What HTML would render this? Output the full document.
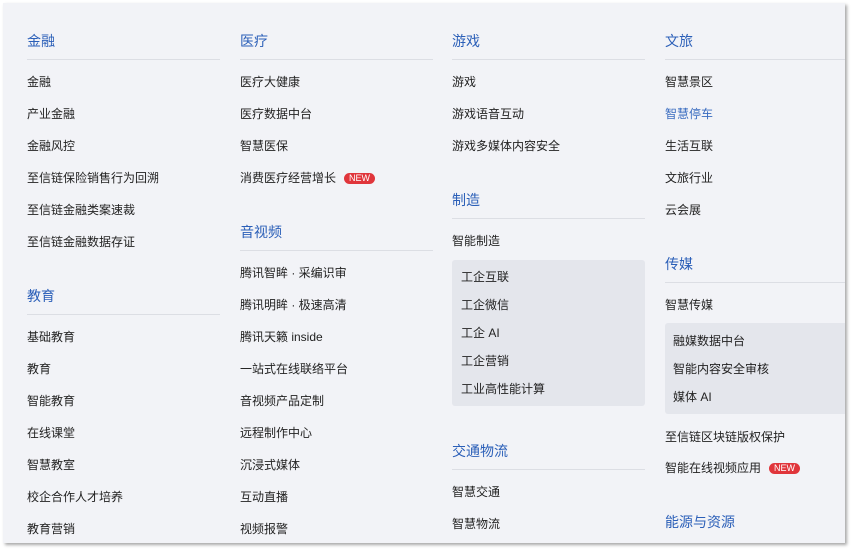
<!DOCTYPE html>
<html><head><meta charset="utf-8"><style>
body{margin:0;width:856px;height:554px;background:#fff;overflow:hidden;font-family:"Liberation Sans","Noto Sans CJK SC",sans-serif;}
#p{position:absolute;left:3px;top:3px;width:842px;height:540px;background:#f2f3f7;box-shadow:2px 2px 3px rgba(0,0,0,.35);overflow:hidden}
.t{position:absolute;font-size:12px;color:#222;line-height:16px;white-space:nowrap;transform:translateY(-8px)}
.h{position:absolute;font-size:14px;color:#2b5fb8;line-height:18px;white-space:nowrap;transform:translateY(-9px)}
.l{position:absolute;height:1px;background:#dcdee4;width:193px}
.b{position:absolute;background:#e4e6ec;border-radius:3px}
.n{display:inline-block;background:#e0353b;color:#fff;font-size:9px;line-height:11px;padding:0 5px;border-radius:6px;margin-left:8px;vertical-align:1px}
</style></head><body><div id="p">
<div class="b" style="left:449px;top:257px;width:193px;height:146px"></div>
<div class="b" style="left:662px;top:320px;width:190px;height:91px"></div>
</div>
<div style="position:absolute;left:0;top:1px;width:856px;height:553px">
<div class="h" style="left:27px;top:40px">金融</div><div class="l" style="left:27px;top:58px"></div>
<div class="t" style="left:27px;top:81px">金融</div>
<div class="t" style="left:27px;top:113px">产业金融</div>
<div class="t" style="left:27px;top:145px">金融风控</div>
<div class="t" style="left:27px;top:177px">至信链保险销售行为回溯</div>
<div class="t" style="left:27px;top:209px">至信链金融类案速裁</div>
<div class="t" style="left:27px;top:241px">至信链金融数据存证</div>
<div class="h" style="left:27px;top:295px">教育</div><div class="l" style="left:27px;top:313px"></div>
<div class="t" style="left:27px;top:336px">基础教育</div>
<div class="t" style="left:27px;top:368px">教育</div>
<div class="t" style="left:27px;top:400px">智能教育</div>
<div class="t" style="left:27px;top:432px">在线课堂</div>
<div class="t" style="left:27px;top:464px">智慧教室</div>
<div class="t" style="left:27px;top:496px">校企合作人才培养</div>
<div class="t" style="left:27px;top:528px">教育营销</div>

<div class="h" style="left:240px;top:40px">医疗</div><div class="l" style="left:240px;top:58px"></div>
<div class="t" style="left:240px;top:81px">医疗大健康</div>
<div class="t" style="left:240px;top:113px">医疗数据中台</div>
<div class="t" style="left:240px;top:145px">智慧医保</div>
<div class="t" style="left:240px;top:177px">消费医疗经营增长<span class="n">NEW</span></div>
<div class="h" style="left:240px;top:231px">音视频</div><div class="l" style="left:240px;top:249px"></div>
<div class="t" style="left:240px;top:272px">腾讯智眸 · 采编识审</div>
<div class="t" style="left:240px;top:304px">腾讯明眸 · 极速高清</div>
<div class="t" style="left:240px;top:336px">腾讯天籁 inside</div>
<div class="t" style="left:240px;top:368px">一站式在线联络平台</div>
<div class="t" style="left:240px;top:400px">音视频产品定制</div>
<div class="t" style="left:240px;top:432px">远程制作中心</div>
<div class="t" style="left:240px;top:464px">沉浸式媒体</div>
<div class="t" style="left:240px;top:496px">互动直播</div>
<div class="t" style="left:240px;top:528px">视频报警</div>

<div class="h" style="left:452px;top:40px">游戏</div><div class="l" style="left:452px;top:58px"></div>
<div class="t" style="left:452px;top:81px">游戏</div>
<div class="t" style="left:452px;top:113px">游戏语音互动</div>
<div class="t" style="left:452px;top:145px">游戏多媒体内容安全</div>
<div class="h" style="left:452px;top:199px">制造</div><div class="l" style="left:452px;top:217px"></div>
<div class="t" style="left:452px;top:240px">智能制造</div>
<div class="t" style="left:461px;top:276px">工企互联</div>
<div class="t" style="left:461px;top:304px">工企微信</div>
<div class="t" style="left:461px;top:332px">工企 AI</div>
<div class="t" style="left:461px;top:360px">工企营销</div>
<div class="t" style="left:461px;top:388px">工业高性能计算</div>
<div class="h" style="left:452px;top:450px">交通物流</div><div class="l" style="left:452px;top:468px"></div>
<div class="t" style="left:452px;top:491px">智慧交通</div>
<div class="t" style="left:452px;top:523px">智慧物流</div>

<div class="h" style="left:665px;top:40px">文旅</div><div class="l" style="left:665px;top:58px;width:180px"></div>
<div class="t" style="left:665px;top:81px">智慧景区</div>
<div class="t" style="left:665px;top:113px;color:#3a6cc0">智慧停车</div>
<div class="t" style="left:665px;top:145px">生活互联</div>
<div class="t" style="left:665px;top:177px">文旅行业</div>
<div class="t" style="left:665px;top:209px">云会展</div>
<div class="h" style="left:665px;top:263px">传媒</div><div class="l" style="left:665px;top:281px;width:180px"></div>
<div class="t" style="left:665px;top:304px">智慧传媒</div>
<div class="t" style="left:673px;top:340px">融媒数据中台</div>
<div class="t" style="left:673px;top:368px">智能内容安全审核</div>
<div class="t" style="left:673px;top:396px">媒体 AI</div>
<div class="t" style="left:665px;top:436px">至信链区块链版权保护</div>
<div class="t" style="left:665px;top:467px">智能在线视频应用<span class="n">NEW</span></div>
<div class="h" style="left:665px;top:521px">能源与资源</div>
</div>
</body></html>
